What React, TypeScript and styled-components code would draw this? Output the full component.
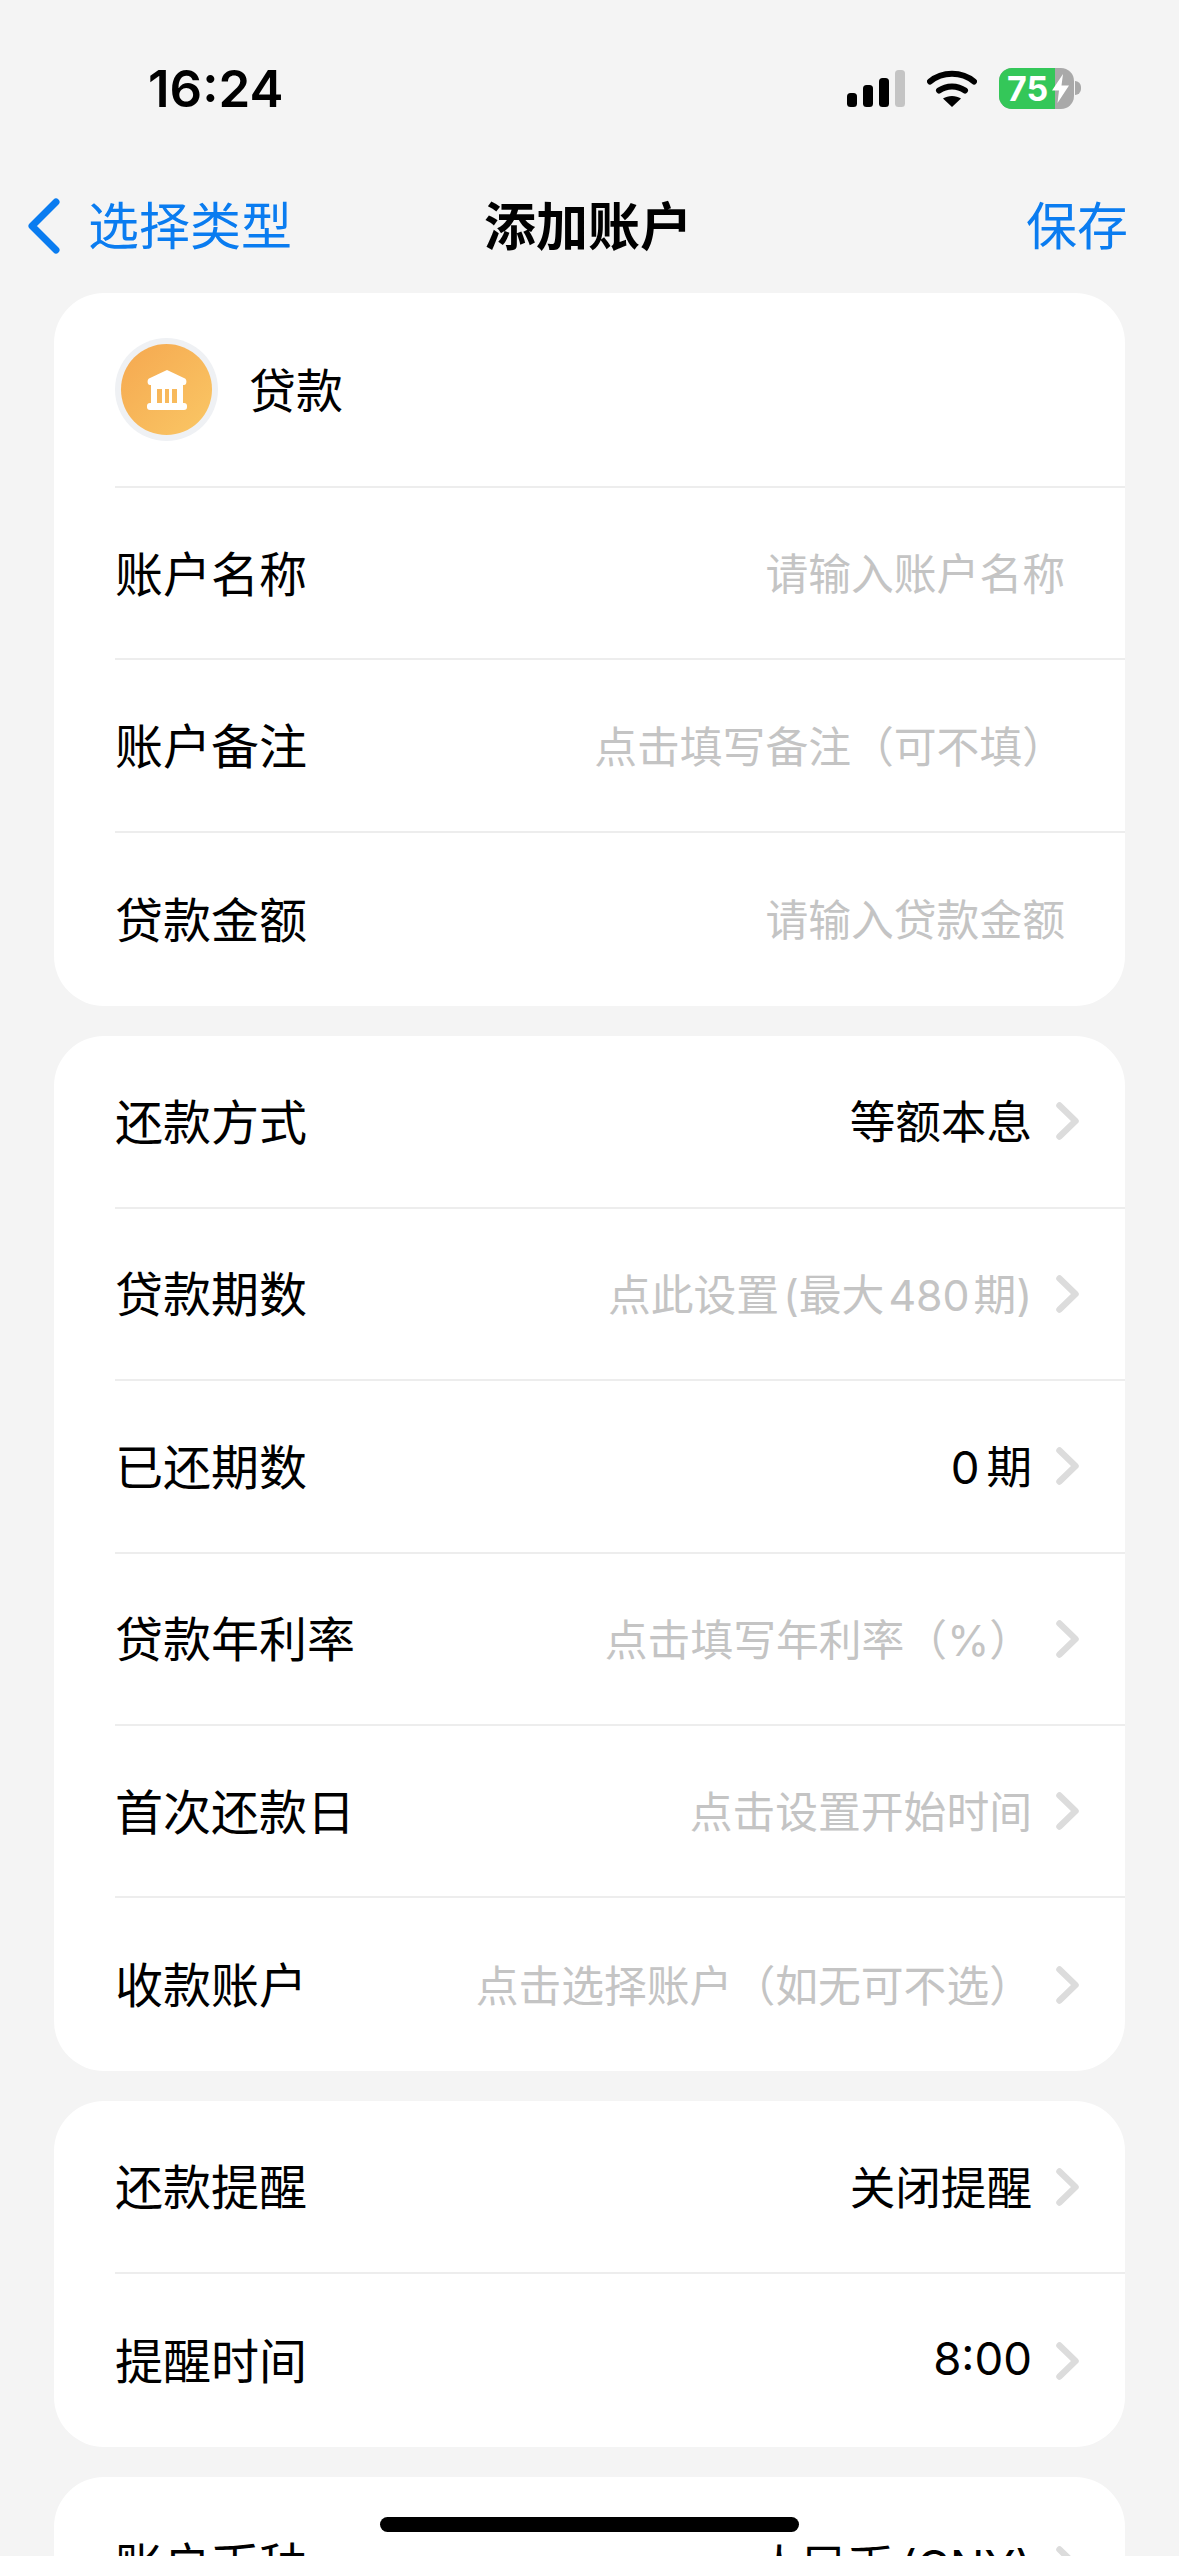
import styled, { createGlobalStyle } from "styled-components";

interface RowData {
  label: string;
  value: string;
  muted?: boolean;
  arrow?: boolean;
}

const firstGroup: RowData[] = [
  { label: "账户名称", value: "请输入账户名称", muted: true },
  { label: "账户备注", value: "点击填写备注（可不填）", muted: true },
  { label: "贷款金额", value: "请输入贷款金额", muted: true },
];

const secondGroup: RowData[] = [
  { label: "还款方式", value: "等额本息", arrow: true },
  { label: "贷款期数", value: "点此设置 (最大 480 期)", muted: true, arrow: true },
  { label: "已还期数", value: "0 期", arrow: true },
  { label: "贷款年利率", value: "点击填写年利率（%）", muted: true, arrow: true },
  { label: "首次还款日", value: "点击设置开始时间", muted: true, arrow: true },
  { label: "收款账户", value: "点击选择账户（如无可不选）", muted: true, arrow: true },
];

const thirdGroup: RowData[] = [
  { label: "还款提醒", value: "关闭提醒", arrow: true },
  { label: "提醒时间", value: "8:00", arrow: true },
];

const fourthGroup: RowData[] = [{ label: "账户币种", value: "人民币 (CNY)", arrow: true }];

function SignalIcon() {
  return (
    <svg width="58" height="37" viewBox="0 0 58 37">
      <rect x="0" y="23" width="10" height="14" rx="3.5" fill="#000" />
      <rect x="16" y="15" width="10" height="22" rx="3.5" fill="#000" />
      <rect x="32" y="8" width="10" height="29" rx="3.5" fill="#000" />
      <rect x="48" y="0" width="10" height="37" rx="3.5" fill="#c4c4c4" />
    </svg>
  );
}

function WifiIcon() {
  return (
    <svg width="50" height="37" viewBox="0 0 50 37">
      <path d="M3 11.5C15 1 35 1 47 11.5" fill="none" stroke="#000" strokeWidth="6" strokeLinecap="round" />
      <path d="M12 20.5C19.500 15 30.500 15 38 20.500" fill="none" stroke="#000" strokeWidth="6" strokeLinecap="round" />
      <path d="M25 37L16 28.500C21 25 29 25 34 28.500Z" fill="#000" />
    </svg>
  );
}

function BoltIcon() {
  return (
    <svg width="17" height="29" viewBox="0 0 17 29">
      <path d="M11 0L0 16.500H7L5.500 29L17 11.500H9.500Z" fill="#fff" />
    </svg>
  );
}

function BankIcon() {
  return (
    <svg width="40" height="40" viewBox="0 0 40 40">
      <path d="M20 0L38 8.500C40 9.500 40 15 37 15H3C0 15 0 9.500 2 8.500Z" fill="#fff" />
      <rect x="4" y="14" width="32" height="5" fill="#fff" />
      <rect x="4" y="15" width="6" height="20" fill="#fff" />
      <rect x="15" y="15" width="3" height="20" fill="#fff" />
      <rect x="22" y="15" width="3" height="20" fill="#fff" />
      <rect x="30" y="15" width="6" height="20" fill="#fff" />
      <rect x="0" y="33" width="40" height="7" rx="3" fill="#fff" />
    </svg>
  );
}

function Rows({ rows }: { rows: RowData[] }) {
  return (
    <>
      {rows.map((row) => (
        <Row key={row.label}>
          <Label>{row.label}</Label>
          <ValueBox $arrow={row.arrow}>
            <Value $muted={row.muted}>{row.value}</Value>
            {row.arrow && (
              <svg width="23" height="38" viewBox="0 0 23 38">
                <path
                  d="M3.500 3.500L19.500 19L3.500 34.500"
                  fill="none"
                  stroke="#dcdcdc"
                  strokeWidth="6.500"
                  strokeLinecap="round"
                  strokeLinejoin="round"
                />
              </svg>
            )}
          </ValueBox>
        </Row>
      ))}
    </>
  );
}

export default function App() {
  return (
    <Page>
      <GlobalStyle />
      <StatusBar>
        <Time>16:24</Time>
        <StatusIcons>
          <SignalIcon />
          <WifiIcon />
          <BatteryWrap>
            <Battery>
              <BatteryFill>75</BatteryFill>
              <BoltSlot>
                <BoltIcon />
              </BoltSlot>
            </Battery>
            <BatteryNub />
          </BatteryWrap>
        </StatusIcons>
      </StatusBar>

      <NavBar>
        <BackLink>
          <svg width="32" height="56" viewBox="0 0 32 56">
            <path
              d="M28 4L4 28L28 52"
              fill="none"
              stroke="#0a7cf0"
              strokeWidth="7"
              strokeLinecap="round"
              strokeLinejoin="round"
            />
          </svg>
          <BackText>选择类型</BackText>
        </BackLink>
        <NavTitle>添加账户</NavTitle>
        <SaveLink>保存</SaveLink>
      </NavBar>

      <Cards>
        <Card>
          <TypeRow>
            <Avatar>
              <AvatarInner>
                <BankIcon />
              </AvatarInner>
            </Avatar>
            <TypeName>贷款</TypeName>
          </TypeRow>
          <Rows rows={firstGroup} />
        </Card>
        <Card>
          <Rows rows={secondGroup} />
        </Card>
        <Card>
          <Rows rows={thirdGroup} />
        </Card>
        <Card>
          <Rows rows={fourthGroup} />
        </Card>
      </Cards>

      <HomeIndicator />
    </Page>
  );
}

const GlobalStyle = createGlobalStyle`
  html, body {
    margin: 0;
    padding: 0;
    background: #f4f4f4;
  }
`;

const Page = styled.div`
  position: relative;
  width: 1179px;
  height: 2556px;
  overflow: hidden;
  background: #f4f4f4;
  color: #000;
  font-family: Inter, "Noto Sans CJK SC", sans-serif;
`;

const StatusBar = styled.div`
  height: 176px;
  box-sizing: border-box;
  padding: 0 98px 0 148px;
  display: flex;
  align-items: center;
  justify-content: space-between;
`;

const Time = styled.div`
  font-size: 51px;
  font-weight: 600;
`;

const StatusIcons = styled.div`
  display: flex;
  align-items: center;
  gap: 22px;
`;

const BatteryWrap = styled.div`
  display: flex;
  align-items: center;
  gap: 1px;
`;

const Battery = styled.div`
  width: 75px;
  height: 41px;
  border-radius: 13px;
  overflow: hidden;
  display: flex;
  position: relative;
  background: #a9a9a9;
`;

const BatteryFill = styled.div`
  width: 56px;
  background: #34c759;
  color: #fff;
  font-size: 34px;
  font-weight: 700;
  line-height: 41px;
  padding-left: 8px;
  box-sizing: border-box;
`;

const BoltSlot = styled.div`
  position: absolute;
  left: 53px;
  top: 6px;
  display: flex;
`;

const BatteryNub = styled.div`
  width: 6px;
  height: 14px;
  background: #a9a9a9;
  border-radius: 0 7px 7px 0;
`;

const NavBar = styled.div`
  height: 100px;
  margin-bottom: 17px;
  box-sizing: border-box;
  padding: 0 51px 0 28px;
  display: grid;
  grid-template-columns: 1fr auto 1fr;
  align-items: center;
  font-size: 50px;
`;

const BackLink = styled.div`
  display: flex;
  align-items: center;
  gap: 28px;
  color: #0a7cf0;
`;

const BackText = styled.span`
  font-size: 51px;
  padding-bottom: 6px;
`;

const NavTitle = styled.div`
  font-size: 52px;
  font-weight: 600;
  padding: 0 0 6px 20px;
`;

const SaveLink = styled.div`
  justify-self: end;
  color: #0a7cf0;
  font-size: 51px;
  padding-bottom: 6px;
`;

const Cards = styled.div`
  display: flex;
  flex-direction: column;
  gap: 30px;
  padding: 0 54px;
`;

const Card = styled.div`
  background: #fff;
  border-radius: 50px;
  padding-left: 61px;
`;

const TypeRow = styled.div`
  height: 193px;
  display: flex;
  align-items: center;
  gap: 31px;
`;

const Avatar = styled.div`
  width: 103px;
  height: 103px;
  border-radius: 50%;
  background: #eff1f4;
  display: flex;
  align-items: center;
  justify-content: center;
`;

const AvatarInner = styled.div`
  width: 91px;
  height: 91px;
  border-radius: 50%;
  background: linear-gradient(135deg, #f5a850, #fac765);
  display: flex;
  align-items: center;
  justify-content: center;
`;

const TypeName = styled.div`
  font-size: 47px;
  padding-bottom: 4px;
`;

const Row = styled.div`
  height: 172.4px;
  box-sizing: border-box;
  display: flex;
  align-items: center;
  justify-content: space-between;
  border-top: 2px solid #ededed;
  &:first-child {
    height: 171px;
    border-top: none;
  }
  &:last-child {
    height: 175px;
  }
`;

const Label = styled.div`
  font-size: 48px;
  padding-bottom: 5px;
`;

const ValueBox = styled.div<{ $arrow?: boolean }>`
  display: flex;
  align-items: center;
  gap: 24px;
  padding-right: ${(p) => (p.$arrow ? "46px" : "60px")};
`;

const Value = styled.div<{ $muted?: boolean }>`
  font-size: ${(p) => (p.$muted ? "42.8px" : "45.6px")};
  color: ${(p) => (p.$muted ? "#c4c4c4" : "#000")};
  word-spacing: ${(p) => (p.$muted ? "-8px" : "-6px")};
  padding-bottom: 4px;
`;

const HomeIndicator = styled.div`
  position: absolute;
  left: 380px;
  top: 2517px;
  width: 419px;
  height: 15px;
  border-radius: 8px;
  background: #000;
`;
